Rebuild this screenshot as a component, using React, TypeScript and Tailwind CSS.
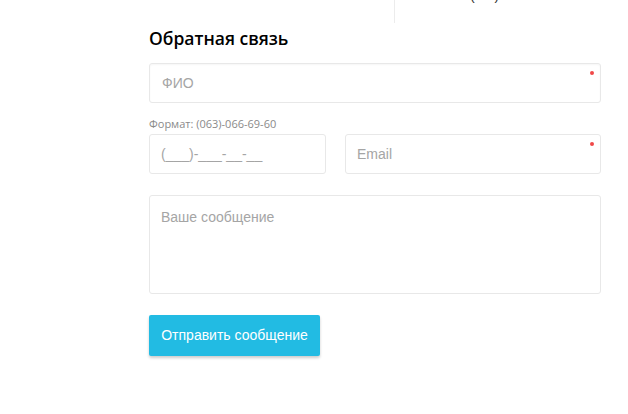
import React from "react";

function Dot() {
  return <span className="absolute right-[6px] top-[7px] h-[4px] w-[4px] rounded-full bg-[#f04848]" />;
}

export default function App() {
  return (
    <div className="relative h-[414px] w-[628px] bg-white" style={{ fontFamily: "'Liberation Sans', Arial, sans-serif" }}>
      <div className="absolute left-[394px] top-0 h-[23px] w-px bg-[#ececec]" />
      <div className="absolute left-[470px] top-[-12px] text-[14px] leading-[14px] text-[#333]">(<span className="tracking-[16px]"> </span>)</div>
      <div className="ml-[149px] w-[452px] pt-[26px]">
        <h2 className="text-[17.5px] leading-[24px] font-semibold text-black" style={{ fontFamily: "'Open Sans', 'Noto Sans', sans-serif" }}>
          Обратная связь
        </h2>
        <div className="relative mt-[13px] flex h-[40px] items-center rounded-[3px] border border-[#e8e8e8] px-[12px] shadow-[inset_0_1px_2px_rgba(0,0,0,0.04)]">
          <span className="text-[14px] text-[#a5a5a5]">ФИО</span>
          <Dot />
        </div>
        <div className="mt-[14px] text-[11px] leading-[14px] text-[#8a8a8a]" style={{ fontFamily: "'Open Sans', sans-serif" }}>
          Формат: (063)-066-69-60
        </div>
        <div className="mt-[3px] flex gap-[19px]">
          <div className="flex h-[40px] w-[177px] items-center rounded-[3px] border border-[#e8e8e8] px-[11px]">
            <span className="text-[14px] text-[#a5a5a5]">(___)-___-__-__</span>
          </div>
          <div className="relative flex h-[40px] flex-1 items-center rounded-[3px] border border-[#e8e8e8] px-[11px]">
            <span className="text-[14px] text-[#a5a5a5]">Email</span>
            <Dot />
          </div>
        </div>
        <div className="mt-[21px] h-[99px] rounded-[3px] border border-[#e8e8e8] px-[11px] pt-[9px]">
          <span className="text-[14px] text-[#a5a5a5]">Ваше сообщение</span>
        </div>
        <button className="mt-[21px] flex h-[41px] w-[171px] items-center justify-center rounded-[2px] bg-[#22bbe3] text-[14px] text-white shadow-[0_2px_3px_rgba(0,0,0,0.2)]">
          Отправить сообщение
        </button>
      </div>
    </div>
  );
}
